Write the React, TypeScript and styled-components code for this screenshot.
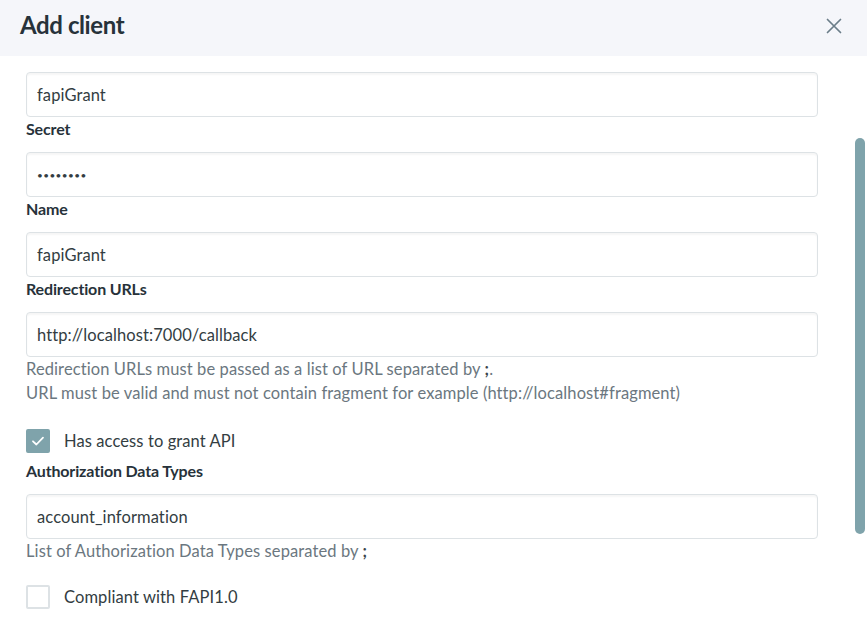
import React from 'react';
import styled, { createGlobalStyle } from 'styled-components';

const GlobalStyle = createGlobalStyle`
    html, body {
        margin: 0;
        padding: 0;
        background: #ffffff;
    }
    body {
        font-family: Lato, "Noto Sans", sans-serif;
        color: #2a3439;
    }
    * {
        box-sizing: border-box;
    }
`;

const Modal = styled.div`
    position: relative;
    width: 867px;
    height: 618px;
    overflow: hidden;
    background: #ffffff;
`;

const Header = styled.header`
    height: 56px;
    display: flex;
    align-items: center;
    justify-content: space-between;
    padding: 0 24px 6px 20px;
    background: #f5f6fa;
`;

const Title = styled.h1`
    margin: 0;
    font-size: 24px;
    font-weight: 700;
    line-height: 28px;
    color: #27323a;
    letter-spacing: -0.4px;
`;

const CloseButton = styled.button`
    display: flex;
    align-items: center;
    justify-content: center;
    width: 18px;
    height: 18px;
    margin-top: 2px;
    padding: 0;
    border: none;
    background: transparent;
    color: #6b7d89;
    cursor: pointer;
`;

const Body = styled.div`
    padding: 16px 49px 0 26px;
    font-size: 16.5px;
    letter-spacing: 0.1px;
`;

const Field = styled.div`
    display: flex;
    flex-direction: column;
`;

const Label = styled.label`
    display: block;
    font-size: 16px;
    font-weight: 700;
    line-height: 24px;
    margin-bottom: 11px;
    color: #27323a;
    letter-spacing: -0.15px;
`;

const Input = styled.input<{ $masked?: boolean }>`
    width: 100%;
    height: 45px;
    padding: 0 10px;
    font-family: inherit;
    font-size: ${(p) => (p.$masked ? '10px' : '16.5px')};
    letter-spacing: ${(p) => (p.$masked ? '0.4px' : '0.1px')};
    color: #333d42;
    background: #ffffff;
    border: 1px solid #dde2e5;
    border-radius: 4px;
    box-shadow: inset 0 2px 2px rgba(0, 0, 0, 0.04);
    outline: none;
`;

const Help = styled.div<{ $gap: number }>`
    line-height: 24px;
    color: #6b7780;
    margin-bottom: ${(p) => p.$gap}px;
`;

const Strong = styled.b`
    font-weight: 700;
    color: #3a454c;
`;

const CheckRow = styled.label`
    display: flex;
    align-items: center;
    gap: 14px;
    height: 24px;
    margin-bottom: 6px;
    color: #333d42;
    cursor: pointer;
`;

const Box = styled.span<{ $checked: boolean }>`
    display: flex;
    align-items: center;
    justify-content: center;
    flex: none;
    width: 24px;
    height: 24px;
    border-radius: 2px;
    background: ${(p) => (p.$checked ? '#7fa3ab' : '#ffffff')};
    border: 2px solid ${(p) => (p.$checked ? '#7fa3ab' : '#dde2e5')};
`;

const Scrollbar = styled.div`
    position: absolute;
    top: 138px;
    right: 2px;
    width: 10px;
    height: 396px;
    border-radius: 5px;
    background: #7fa3ab;
`;

const Checkbox: React.FC<{ checked: boolean; label: string }> = ({ checked, label }) => (
    <CheckRow>
        <Box $checked={checked}>
            {checked && (
                <svg width="16" height="16" viewBox="0 0 16 16" fill="none">
                    <path d="M3 8.3 L6.4 11.5 L13 4.6" stroke="#ffffff" strokeWidth="1.8" strokeLinecap="round" strokeLinejoin="round" />
                </svg>
            )}
        </Box>
        {label}
    </CheckRow>
);

const App: React.FC = () => (
    <>
        <GlobalStyle />
        <Modal>
            <Header>
                <Title>Add client</Title>
                <CloseButton aria-label="Close">
                    <svg width="16" height="16" viewBox="0 0 16 16" fill="none">
                        <path d="M1.5 1.5 L14.5 14.5 M14.5 1.5 L1.5 14.5" stroke="currentColor" strokeWidth="1.7" strokeLinecap="round" />
                    </svg>
                </CloseButton>
            </Header>
            <Body>
                <Field>
                    <Input defaultValue="fapiGrant" readOnly />
                    <Label>Secret</Label>
                </Field>
                <Field>
                    <Input $masked defaultValue="••••••••" readOnly />
                    <Label>Name</Label>
                </Field>
                <Field>
                    <Input defaultValue="fapiGrant" readOnly />
                    <Label>Redirection URLs</Label>
                </Field>
                <Field>
                    <Input defaultValue="http://localhost:7000/callback" readOnly />
                    <Help $gap={24}>
                        Redirection URLs must be passed as a list of URL separated by <Strong>;</Strong>.
                        <br />
                        URL must be valid and must not contain fragment for example (http://localhost#fragment)
                    </Help>
                </Field>
                <Checkbox checked label="Has access to grant API" />
                <Label>Authorization Data Types</Label>
                <Field>
                    <Input defaultValue="account_information" readOnly />
                    <Help $gap={22}>
                        List of Authorization Data Types separated by <Strong>;</Strong>
                    </Help>
                </Field>
                <Checkbox checked={false} label="Compliant with FAPI1.0" />
            </Body>
            <Scrollbar />
        </Modal>
    </>
);

export default App;
